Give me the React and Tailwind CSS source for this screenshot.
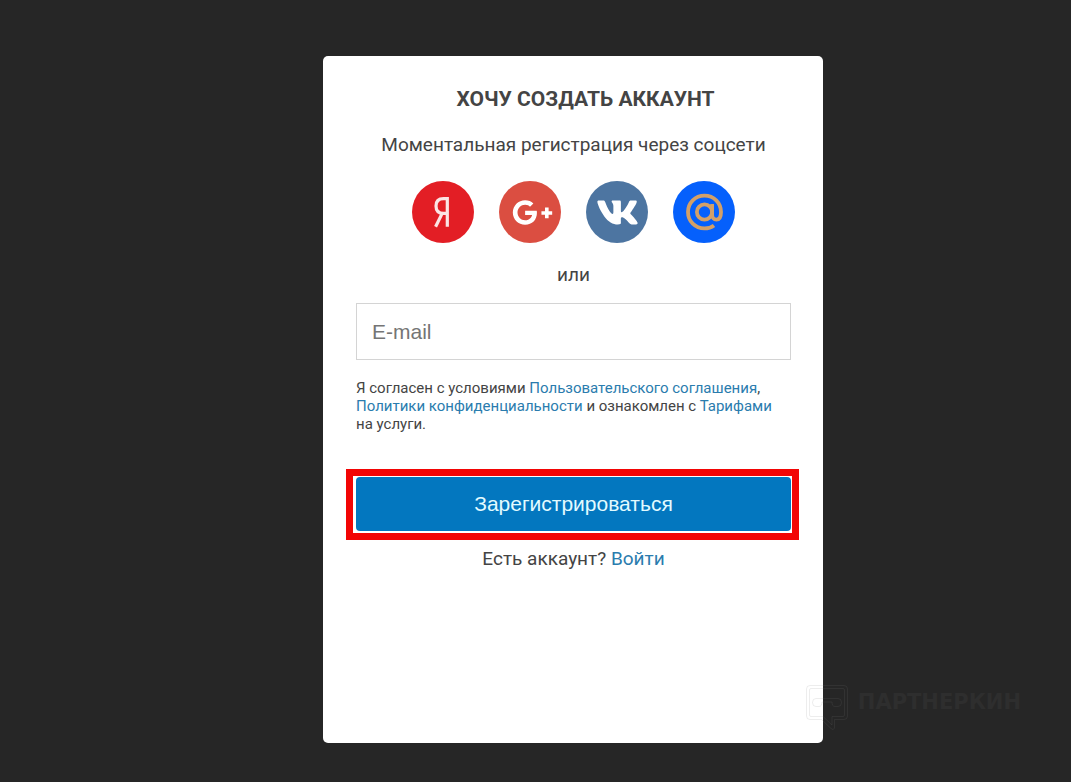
import React, { useState } from "react";
import { FaGooglePlusG, FaVk } from "react-icons/fa";

function YandexLogo() {
  return (
    <svg viewBox="0 0 62 62" className="w-full h-full" fill="none">
      <g stroke="#fbe4e4" strokeWidth="3.2">
        <path d="M35.300 45.800V17.600H31.500C26.500 17.600 24 20.600 24 25C24 29.600 26.600 32.400 31.500 32.400H35.300" />
        <path d="M30.200 32.400L23.600 45.800" />
      </g>
    </svg>
  );
}

function MailLogo() {
  return (
    <svg viewBox="0 0 62 62" className="w-full h-full" fill="none">
      <g stroke="#d3a068" strokeWidth="3.8">
        <circle cx="31.5" cy="31" r="7.6" />
        <path d="M39.1 23V33.4C39.1 36.8 41 38.6 43.4 38.6C46.2 38.6 48 36.4 48 31C48 21.8 40.8 14.6 31.5 14.6C22.2 14.6 15 21.8 15 31C15 40.2 22.2 47.4 31.5 47.4C35.2 47.4 38.4 46.4 41 44.4" />
      </g>
    </svg>
  );
}

function Watermark() {
  return (
    <div className="absolute right-[50px] bottom-[51px] flex items-start gap-[10px] text-[#2e2e2e] select-none pointer-events-none">
      <svg width="42" height="46" viewBox="0 0 42 46" fill="none" stroke="#808080" strokeOpacity="0.14">
        <path d="M4 .5H38Q41.500 .5 41.500 4V31Q41.500 34.500 38 34.500H28.500V43Q27.500 46 25 43.500L15.500 34.500H4Q.5 34.500 .5 31V4Q.5 .5 4 .5Z" />
        <path d="M5 3.500H37Q38.500 3.500 38.500 5V30Q38.500 31.500 37 31.500H26V40L17 31.500H5Q3.500 31.500 3.500 30V5Q3.500 3.500 5 3.500Z" />
        <path d="M10 13.500H32Q35.500 13.500 35.500 17.500T32 21.500H29Q26 21.500 26 17H16Q16 21.500 13 21.500H10Q6.500 21.500 6.500 17.500T10 13.500Z" />
      </svg>
      <span className="font-['DejaVu_Sans',sans-serif] text-[21px] leading-[34px] font-bold">
        ПАРТНЕРКИН
      </span>
    </div>
  );
}

function App() {
  const [email, setEmail] = useState("");

  const socialList = [
    {
      icon: <YandexLogo />,
      name: "Яндекс",
      style: "bg-[#e31e25]"
    },
    {
      icon: <FaGooglePlusG className="text-[41px] ml-1" />,
      name: "Google+",
      style: "bg-[#db4e41]"
    },
    {
      icon: <FaVk className="text-[43px]" />,
      name: "ВКонтакте",
      style: "bg-[#4d75a1]"
    },
    {
      icon: <MailLogo />,
      name: "Mail.ru",
      style: "bg-[#0560fc]"
    }
  ];

  function handleSubmit(e) {
    e.preventDefault();
  }

  return (
    <div className="relative min-h-screen bg-[#262626] flex justify-center pl-[75px] pt-14 pb-[39px] font-['Roboto',sans-serif] text-[#444444]">
      <form
        onSubmit={handleSubmit}
        className="w-full max-w-[500px] bg-white rounded-[5px] pl-[33px] pr-8 pt-7"
      >
        <h1 className="pl-6 text-center text-[21px] leading-[30px] font-bold">
          ХОЧУ СОЗДАТЬ АККАУНТ
        </h1>
        <p className="mt-4 text-center text-[19px] leading-[30px]">
          Моментальная регистрация через соцсети
        </p>

        <div className="mt-[21px] flex justify-center gap-[25px]">
          {socialList.map((item, index) => {
            return (
              <button
                type="button"
                key={index}
                aria-label={item.name}
                className={`${item.style} w-[62px] h-[62px] rounded-full flex items-center justify-center text-white cursor-pointer`}
              >
                {item.icon}
              </button>
            );
          })}
        </div>

        <p className="mt-[17px] text-center text-[19px] leading-[30px]">или</p>

        <input
          type="email"
          aria-label="E-mail"
          placeholder="E-mail"
          value={email}
          onChange={(e) => setEmail(e.target.value)}
          className="mt-[13px] block w-full h-[57px] border border-[#d4d4d4] px-[15px] font-['Liberation_Sans',sans-serif] text-[21px] placeholder:text-[#757575] outline-none"
        />

        <p className="mt-[19px] text-[15px] leading-[18px]">
          Я согласен с условиями{" "}
          <a href="#terms" className="text-[#2a7cae]">
            Пользовательского соглашения
          </a>
          ,{" "}
          <a href="#privacy" className="text-[#2a7cae]">
            Политики конфиденциальности
          </a>{" "}
          и ознакомлен с{" "}
          <a href="#prices" className="text-[#2a7cae]">
            Тарифами
          </a>{" "}
          на услуги.
        </p>

        <div className="mt-9 -ml-[10px] -mr-2 border-[7px] border-[#f20505] pl-[3px] pr-px pt-px pb-[2px]">
          <button
            type="submit"
            className="block w-full h-[54px] rounded-[4px] bg-[#0377bf] text-[#e2fbff] font-['Liberation_Sans',sans-serif] text-[21px] cursor-pointer"
          >
            Зарегистрироваться
          </button>
        </div>

        <p className="mt-1 text-center text-[19px] leading-[30px]">
          Есть аккаунт?{" "}
          <a href="#login" className="text-[#2a7cae]">
            Войти
          </a>
        </p>
      </form>

      <Watermark />
    </div>
  );
}

export default App;
